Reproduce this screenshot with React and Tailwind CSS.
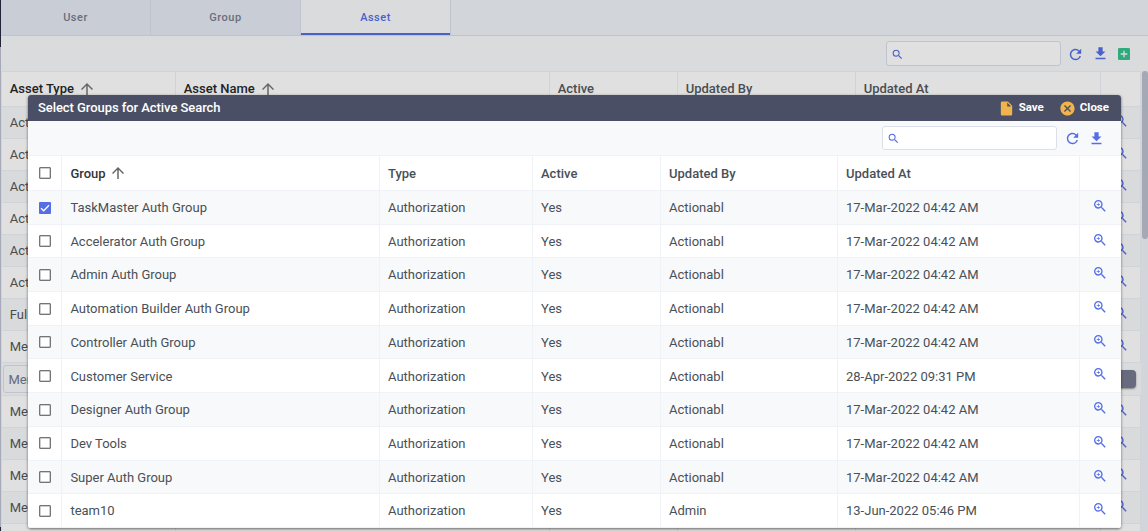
import React from "react";
import { MdSearch, MdRefresh, MdFileDownload, MdAddBox, MdZoomIn, MdCancel, MdInsertDriveFile, MdArrowUpward } from "react-icons/md";

const groups = [
  ["TaskMaster Auth Group", "Actionabl", "17-Mar-2022 04:42 AM", true],
  ["Accelerator Auth Group", "Actionabl", "17-Mar-2022 04:42 AM"],
  ["Admin Auth Group", "Actionabl", "17-Mar-2022 04:42 AM"],
  ["Automation Builder Auth Group", "Actionabl", "17-Mar-2022 04:42 AM"],
  ["Controller Auth Group", "Actionabl", "17-Mar-2022 04:42 AM"],
  ["Customer Service", "Actionabl", "28-Apr-2022 09:31 PM"],
  ["Designer Auth Group", "Actionabl", "17-Mar-2022 04:42 AM"],
  ["Dev Tools", "Actionabl", "17-Mar-2022 04:42 AM"],
  ["Super Auth Group", "Actionabl", "17-Mar-2022 04:42 AM"],
  ["team10", "Admin", "13-Jun-2022 05:46 PM"],
];

const assets = ["Act", "Act", "Act", "Act", "Act", "Act", "Ful", "Me", "edit", "Me", "Me", "Me", "Me", ""];

const modalGrid = "grid grid-cols-[33px_318px_153px_128px_177px_242px_42px]";
const pageGrid = "grid grid-cols-[174px_374px_128px_178px_245px_40px]";

function Checkbox({ checked }) {
  return (
    <span
      className={
        "flex size-3 items-center justify-center rounded-[1px] " +
        (checked ? "bg-[#556ee6]" : "border border-[#757575] bg-white shadow-[inset_0_0_0_0.5px_#a0a0a0]")
      }
    >
      {checked && (
        <svg viewBox="0 0 12 12" className="size-3" fill="none" stroke="white" strokeWidth="1.3">
          <path d="M2 6.2 4.7 8.8 10 3.2" />
        </svg>
      )}
    </span>
  );
}

function Cell({ children, className = "pt-px pl-2" }) {
  return <div className={"flex items-center border-l border-[#eff2f7] " + className}>{children}</div>;
}

function PageCell({ children, className = "" }) {
  return <div className={"flex items-center border-r border-[#d0d3d8] pl-[7.7px] " + className}>{children}</div>;
}

function Tab({ children, active }) {
  return (
    <div
      className={
        "flex h-9 w-[150px] items-center justify-center border-r border-b border-[#bfc3cf] pt-0.5 text-[11px] font-medium tracking-[0.5px] " +
        (active ? "bg-[#dadbdd] text-[#4a60ca] shadow-[inset_0_-2px_0_#4a60ca]" : "bg-[#c9cdd5] text-[#6a6d7c]")
      }
    >
      {children}
    </div>
  );
}

function Page() {
  return (
    <div className="flex h-[531px] w-[1148px] overflow-hidden bg-[#d2d5da]">
      <div className="flex w-px shrink-0 flex-col bg-[#22243a]">
        <div className="mt-[47px] h-[480px] bg-[#a5a9b8]" />
      </div>
      <div className="flex min-w-0 flex-1 flex-col">
        <div className="flex h-9 shrink-0 border-b border-[#bfc3cf]">
          <Tab>User</Tab>
          <Tab>Group</Tab>
          <Tab active>Asset</Tab>
        </div>
        <div className="flex h-[35px] shrink-0 items-center justify-end bg-[#dadbdd] pr-4">
          <div className="flex h-[25px] w-[175px] items-center rounded-[3px] border border-[#bfc3cf] bg-[#e0e0e0] pt-px pl-[4px]">
            <MdSearch className="size-[13px] text-[#4a60ca]" />
          </div>
          <MdRefresh className="mt-px ml-[5.5px] size-[17px] text-[#4a60ca]" />
          <MdFileDownload className="ml-2 size-[17px] text-[#4a60ca]" />
          <MdAddBox className="mt-px ml-[7.5px] size-4 text-[#2eaa7c]" />
        </div>
        <div className="flex flex-1">
          <div className="ml-px w-[1140px] text-[13px] text-[#494d52]">
            <div className={pageGrid + " h-9 border-y border-[#d0d3d8] bg-[#e0e0e0] font-medium"}>
              <PageCell className="text-[#202225]">Asset Type<MdArrowUpward className="ml-1 size-[18px] text-[#666]" /></PageCell>
              <PageCell className="text-[#202225]">Asset Name<MdArrowUpward className="ml-1 size-[18px] text-[#666]" /></PageCell>
              <PageCell>Active</PageCell>
              <PageCell>Updated By</PageCell>
              <PageCell>Updated At</PageCell>
              <PageCell />
            </div>
            {assets.map((a, i) =>
              a === "edit" ? (
                <div key={i} className="flex h-[33px] items-center justify-between border-b border-[#d0d3d8] bg-[#dadbdd] pr-[5px] pl-px">
                  <div className="flex h-7 w-40 items-center rounded-[3px] border border-[#bfc3cf] bg-[#dadbdd] pt-px pl-[4.4px] text-[#626a7c]">Memo</div>
                  <div className="h-[18px] w-12 rounded-[4px] bg-[#686a7e] shadow-[0_1px_2px_rgba(0,0,0,0.4)]" />
                </div>
              ) : (
                <div key={i} className={pageGrid + " h-8 border-b border-[#d0d3d8] " + (i % 2 === 0 ? "bg-[#d9dadc]" : "bg-[#e0e0e0]")}>
                  <PageCell>{a}</PageCell>
                  <PageCell /><PageCell /><PageCell /><PageCell />
                  <PageCell className="pb-1"><MdSearch className="ml-[4px] size-4 text-[#4a60ca]" /></PageCell>
                </div>
              )
            )}
          </div>
          <div className="ml-px h-[168px] w-[6px] rounded-[3px] bg-[#a5a9b5]" />
        </div>
      </div>
    </div>
  );
}

function Modal() {
  return (
    <div className="absolute top-[95px] left-[28px] w-[1093px] overflow-hidden rounded-[3px] bg-white text-[13px] text-[#495057] shadow-[0_1px_3px_rgba(0,0,0,0.55)]">
      <div className="flex h-[26px] items-center bg-[#4a4f65] pr-3 pl-[10px] font-medium text-white">
        <span className="flex-1 tracking-[-0.06px]">Select Groups for Active Search</span>
        <MdInsertDriveFile className="size-[17px] text-[#f1b44c]" />
        <span className="ml-[4px] text-[11.5px] font-bold">Save</span>
        <MdCancel className="mt-px ml-[15px] size-[17px] text-[#f1b44c]" />
        <span className="ml-1 text-[11.5px] font-bold">Close</span>
      </div>
      <div className="flex h-[34px] items-center bg-[#f8f9fb] pl-[854px]">
        <div className="flex h-6 w-[175px] items-center rounded-[3px] border border-[#dbdfe9] bg-white pt-px pl-[4px]">
          <MdSearch className="size-[13px] text-[#556ee6]" />
        </div>
        <MdRefresh className="ml-[6.5px] size-[17px] text-[#556ee6]" />
        <MdFileDownload className="ml-[7px] size-[17px] text-[#556ee6]" />
      </div>
      <div className={modalGrid + " h-9 border-y border-[#eff2f7] font-medium"}>
        <div className="flex items-center pl-[11px]"><Checkbox /></div>
        <Cell className="pt-px pl-[8.4px] text-[#333]">Group<MdArrowUpward className="mb-px ml-[3px] size-[18px] text-[#666]" /></Cell>
        <Cell>Type</Cell>
        <Cell>Active</Cell>
        <Cell>Updated By</Cell>
        <Cell>Updated At</Cell>
        <Cell />
      </div>
      {groups.map(([name, by, at, checked], i) => (
        <div key={name} className={modalGrid + " h-[33.7px] border-b border-[#eff2f7] " + (i % 2 === 0 && i < 9 ? "bg-[#f8f9fa]" : "bg-white")}>
          <div className="flex items-center pt-[0.6px] pl-[11px]"><Checkbox checked={checked} /></div>
          <Cell className="pt-px pl-[8.4px]">{name}</Cell>
          <Cell>Authorization</Cell>
          <Cell>Yes</Cell>
          <Cell>{by}</Cell>
          <Cell>{at}</Cell>
          <Cell className="pb-[2.6px] pl-3"><MdZoomIn className="size-4 text-[#556ee6]" /></Cell>
        </div>
      ))}
    </div>
  );
}

export default function App() {
  return (
    <div className="relative h-[531px] w-[1148px] overflow-hidden font-['Roboto',sans-serif]">
      <Page />
      <Modal />
    </div>
  );
}
